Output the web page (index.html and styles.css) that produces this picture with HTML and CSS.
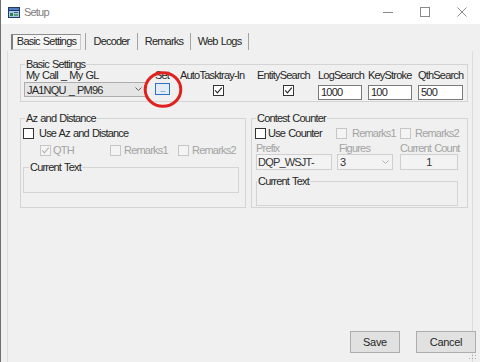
FILE: index.html
```html
<!DOCTYPE html>
<html lang="en">
<head>
<meta charset="utf-8">
<title>Setup</title>
<link rel="stylesheet" href="styles.css">
</head>
<body>
<div class="window">
  <div class="titlebar">
    <svg class="app-icon" viewBox="0 0 12 11" width="12" height="11">
      <rect x="0" y="0" width="12" height="11" fill="#1f3b63"/>
      <rect x="1" y="1" width="10" height="2" fill="#4f7fc0"/>
      <rect x="1" y="4" width="10" height="6" fill="#a9c9ea"/>
      <rect x="2" y="6" width="3" height="3" fill="#2f7f55"/>
      <rect x="6" y="5" width="4" height="1" fill="#3c5f8f"/>
      <rect x="6" y="7" width="4" height="2" fill="#58a070"/>
    </svg>
    <span class="title">Setup</span>
    <div class="caption">
      <div class="cap-btn"><svg width="10" height="10" viewBox="0 0 10 10"><line x1="0" y1="5.5" x2="10" y2="5.5" stroke="#8a8a8a" stroke-width="1"/></svg></div>
      <div class="cap-btn"><svg width="10" height="10" viewBox="0 0 10 10"><rect x="0.5" y="0.5" width="9" height="9" fill="none" stroke="#8a8a8a" stroke-width="1"/></svg></div>
      <div class="cap-btn"><svg width="10" height="10" viewBox="0 0 10 10"><path d="M0.5 0.5 L9.5 9.5 M9.5 0.5 L0.5 9.5" stroke="#8a8a8a" stroke-width="1"/></svg></div>
    </div>
  </div>

  <div class="client">
    <div class="tabs">
      <div class="tab tab-selected">Basic Settings</div>
      <div class="tab tab-decoder">Decoder</div>
      <div class="tab tab-remarks">Remarks</div>
      <div class="tab tab-weblogs">Web Logs</div>
    </div>

    <div class="panel">
      <fieldset class="group group-basic">
        <legend>Basic Settings</legend>
        <div class="basic-row">
          <div class="col col-call">
            <span class="lbl lbl-call">My Call _ My GL</span>
            <div class="combo">
              <span class="combo-text">JA1NQU _ PM96</span>
              <svg class="chev" width="7" height="5" viewBox="0 0 7 5"><polyline points="0.5,0.5 3.5,3.5 6.5,0.5" fill="none" stroke="#606060" stroke-width="1"/></svg>
            </div>
          </div>
          <div class="col col-set">
            <span class="lbl">Set</span>
            <div class="set-btn">...</div>
          </div>
          <div class="col col-tray">
            <span class="lbl">AutoTasktray-In</span>
            <span class="cb cb-tray"><svg width="9" height="9" viewBox="0 0 9 9"><polyline points="1.2,4.4 3.4,6.8 7.8,1.6" fill="none" stroke="#222" stroke-width="1.1"/></svg></span>
          </div>
          <div class="col col-entity">
            <span class="lbl">EntitySearch</span>
            <span class="cb cb-entity"><svg width="9" height="9" viewBox="0 0 9 9"><polyline points="1.2,4.4 3.4,6.8 7.8,1.6" fill="none" stroke="#222" stroke-width="1.1"/></svg></span>
          </div>
          <div class="col col-log">
            <span class="lbl">LogSearch</span>
            <div class="input">1000</div>
          </div>
          <div class="col col-key">
            <span class="lbl">KeyStroke</span>
            <div class="input">100</div>
          </div>
          <div class="col col-qth">
            <span class="lbl">QthSearch</span>
            <div class="input">500</div>
          </div>
        </div>
      </fieldset>

      <div class="groups-row">
        <fieldset class="group group-az">
          <legend>Az and Distance</legend>
          <div class="chk-row az-row1">
            <span class="chk-item"><span class="cb"></span><span class="chk-text gap5">Use Az and Distance</span></span>
          </div>
          <div class="chk-row az-row2">
            <span class="chk-item item-qth"><span class="cb cb-dis"><svg width="9" height="9" viewBox="0 0 9 9"><polyline points="1.2,4.4 3.4,6.8 7.8,1.6" fill="none" stroke="#b4b4b4" stroke-width="1.1"/></svg></span><span class="chk-text dis gap2">QTH</span></span>
            <span class="chk-item item-az-r1"><span class="cb cb-dis"></span><span class="chk-text dis gap3">Remarks1</span></span>
            <span class="chk-item"><span class="cb cb-dis"></span><span class="chk-text dis gap3">Remarks2</span></span>
          </div>
          <fieldset class="group inner inner-az">
            <legend>Current Text</legend>
          </fieldset>
        </fieldset>

        <fieldset class="group group-contest">
          <legend>Contest Counter</legend>
          <div class="chk-row cc-row1">
            <span class="chk-item item-use"><span class="cb"></span><span class="chk-text gap2">Use Counter</span></span>
            <span class="chk-item item-cc-r1"><span class="cb cb-dis"></span><span class="chk-text dis gap5">Remarks1</span></span>
            <span class="chk-item"><span class="cb cb-dis"></span><span class="chk-text dis gap4">Remarks2</span></span>
          </div>
          <div class="cc-fields">
            <div class="col col-prefix">
              <span class="lbl dis">Prefix</span>
              <div class="field">DQP_WSJT-</div>
            </div>
            <div class="col col-fig">
              <span class="lbl dis lbl-fig">Figures</span>
              <div class="field field-combo">
                <span>3</span>
                <svg class="chev" width="7" height="5" viewBox="0 0 7 5"><polyline points="0.5,0.5 3.5,3.5 6.5,0.5" fill="none" stroke="#b0b0b0" stroke-width="1"/></svg>
              </div>
            </div>
            <div class="col col-count">
              <span class="lbl dis">Current Count</span>
              <div class="field field-center">1</div>
            </div>
          </div>
          <fieldset class="group inner inner-cc">
            <legend>Current Text</legend>
          </fieldset>
        </fieldset>
      </div>

      <div class="buttons">
        <div class="btn btn-save">Save</div>
        <div class="btn btn-cancel">Cancel</div>
      </div>
    </div>
  </div>

  <svg class="grip" width="8" height="8" viewBox="0 0 8 8">
    <rect x="6" y="0" width="1" height="1" fill="#a8a8a8"/>
    <rect x="3" y="3" width="1" height="1" fill="#a8a8a8"/>
    <rect x="6" y="3" width="1" height="1" fill="#a8a8a8"/>
    <rect x="0" y="6" width="1" height="1" fill="#a8a8a8"/>
    <rect x="3" y="6" width="1" height="1" fill="#a8a8a8"/>
    <rect x="6" y="6" width="1" height="1" fill="#a8a8a8"/>
  </svg>

  <svg class="annotation" width="40" height="37" viewBox="0 0 40 37">
    <ellipse cx="20" cy="18.5" rx="17.8" ry="16.8" fill="none" stroke="#e0221f" stroke-width="3"/>
  </svg>
</div>
</body>
</html>
```

FILE: styles.css
```css
* { box-sizing: border-box; }
html, body { margin: 0; padding: 0; }
body {
  width: 480px;
  height: 362px;
  overflow: hidden;
  background: #eff0ef;
  font-family: "Liberation Sans", Arial, sans-serif;
  font-size: 11px;
  letter-spacing: -0.8px;
  word-spacing: 0.8px;
  color: #262626;
}
.window {
  position: relative;
  width: 480px;
  height: 362px;
  display: flex;
  flex-direction: column;
  border-left: 1px solid #6f6f6f;
  background: #eff0ef;
}

/* title bar */
.titlebar {
  flex: none;
  height: 24px;
  background: #ffffff;
  display: flex;
  align-items: center;
}
.app-icon { margin-left: 7px; flex: none; }
.title { margin-left: 4px; font-size: 11px; color: #7e7e7e; }
.caption { margin-left: auto; display: flex; }
.cap-btn {
  width: 37px;
  height: 24px;
  display: flex;
  align-items: center;
  justify-content: center;
}

/* client */
.client {
  flex: 1;
  display: flex;
  flex-direction: column;
  min-height: 0;
}
.tabs {
  display: flex;
  margin-top: 9px;
  padding-left: 10px;
  height: 17px;
  flex: none;
}
.tab {
  height: 17px;
  line-height: 16px;
  text-align: center;
  white-space: nowrap;
}
.tab-selected {
  width: 70px;
  margin-right: 4px;
  margin-top: 1px;
  height: 16px;
  line-height: 13px;
  border-style: solid;
  border-width: 1px 1px 1px 2px;
  border-color: #8c8c8c #c9c9c9 #d6d6d6 #7c7c7c;
  background: #f6f6f6;
}
.tab-decoder { width: 52px; border-left: 1px solid #a3a3a3; }
.tab-remarks { width: 53px; border-left: 1px solid #a3a3a3; }
.tab-weblogs { width: 59px; border-left: 1px solid #a3a3a3; border-right: 1px solid #a3a3a3; }

.panel {
  flex: 1;
  margin: 1px 7px 0 6px;
  border-left: 1px solid #dcdddc;
  border-right: 1px solid #dcdddc;
  padding: 7px 0 0 12px;
  display: flex;
  flex-direction: column;
}

/* group boxes */
.group {
  margin: 0;
  padding: 0;
  border: 1px solid #d3d4d3;
  min-width: 0;
}
.group > legend {
  padding: 0 1px;
  margin-left: 4px;
  line-height: 12px;
  white-space: nowrap;
}
.group-basic { width: 448px; padding-bottom: 1px; }

.basic-row {
  display: flex;
  align-items: flex-start;
  padding-left: 3px;
}
.col { display: flex; flex-direction: column; flex: none; }
.lbl { display: block; line-height: 11px; height: 11px; white-space: nowrap; }
.lbl-call { padding-left: 2px; }
.col-call { width: 122px; }
.col-set { width: 15px; margin-left: 9px; }
.col-tray { width: 72px; margin-left: 10px; }
.col-entity { width: 51px; margin-left: 5px; }
.col-log { width: 44px; margin-left: 10px; }
.col-key { width: 44px; margin-left: 6px; }
.col-qth { width: 45px; margin-left: 6px; }

.combo {
  margin-top: 1px;
  height: 15px;
  width: 122px;
  background: #e5e5e5;
  border: 1px solid #adadad;
  display: flex;
  align-items: center;
  padding-left: 2px;
}
.combo .chev { margin-left: auto; margin-right: 3px; }

.set-btn {
  margin-top: 2px;
  width: 15px;
  height: 12px;
  border: 1px solid #2c72c7;
  background: #e3edf8;
  color: #2a4f80;
  font-size: 8px;
  line-height: 12px;
  text-align: center;
  letter-spacing: -0.5px;
}

.cb {
  width: 11px;
  height: 11px;
  border: 1px solid #333333;
  background: #ffffff;
  flex: none;
  display: inline-flex;
  align-items: center;
  justify-content: center;
}
.cb-dis { border-color: #c6c6c6; background: #f4f4f4; }
.cb-tray { margin-top: 4px; margin-left: 33px; }
.cb-entity { margin-top: 4px; margin-left: 26px; }

.input {
  margin-top: 4px;
  height: 15px;
  border: 1px solid #7a7a7a;
  background: #ffffff;
  padding-left: 2px;
  line-height: 13px;
}

/* lower groups */
.groups-row {
  display: flex;
  margin-top: 10px;
}
.group-az { width: 226px; padding-bottom: 14px; }
.group-contest { width: 217px; margin-left: 5px; padding-bottom: 1px; }

.chk-row {
  display: flex;
  align-items: center;
  height: 13px;
}
.chk-item { display: flex; align-items: center; white-space: nowrap; flex: none; }
.chk-text { line-height: 13px; }
.gap1 { margin-left: 1px; }
.gap2 { margin-left: 2px; }
.gap3 { margin-left: 3px; }
.gap4 { margin-left: 4px; }
.gap5 { margin-left: 5px; }
.dis { color: #a3a3a3; }

.az-row1 { margin-top: 3px; padding-left: 2px; }
.az-row2 { margin-top: 4px; padding-left: 19px; }
.item-qth { width: 70px; }
.item-az-r1 { width: 68px; }

.inner { height: 32px; }
.inner-az { margin: 4px 0 0 2px; width: 216px; }
.inner-az > legend { margin-left: 5px; }

.cc-row1 { margin-top: 3px; padding-left: 3px; }
.item-use { width: 81px; }
.item-cc-r1 { width: 64px; }

.cc-fields {
  display: flex;
  align-items: flex-start;
  margin-top: 3px;
  padding-left: 4px;
}
.col-prefix { width: 76px; }
.col-fig { width: 56px; margin-left: 5px; }
.col-count { width: 58px; margin-left: 7px; }
.lbl-fig { padding-left: 2px; }
.field {
  height: 16px;
  border: 1px solid #cfcfcf;
  background: #f3f3f3;
  color: #333333;
  line-height: 14px;
  padding-left: 1px;
  display: flex;
  align-items: center;
  white-space: nowrap;
}
.field-combo { padding-left: 2px; }
.field-combo .chev { margin-left: auto; margin-right: 3px; }
.field-center { justify-content: center; padding-left: 0; }

.inner-cc { margin: 5px 0 0 4px; width: 202px; height: 31px; }
.inner-cc > legend { margin-left: 0; }

/* buttons */
.buttons {
  margin-top: auto;
  margin-right: -4px;
  margin-bottom: 9px;
  display: flex;
  justify-content: flex-end;
}
.btn {
  height: 22px;
  line-height: 20px;
  text-align: center;
  border: 1px solid #adadad;
  background: #e1e1e1;
  letter-spacing: -0.3px;
}
.btn-save { width: 50px; }
.btn-cancel { width: 60px; margin-left: 16px; }

/* overlays */
.grip { position: absolute; right: 3px; bottom: 2px; }
.annotation { position: absolute; left: 142px; top: 71px; }
```
